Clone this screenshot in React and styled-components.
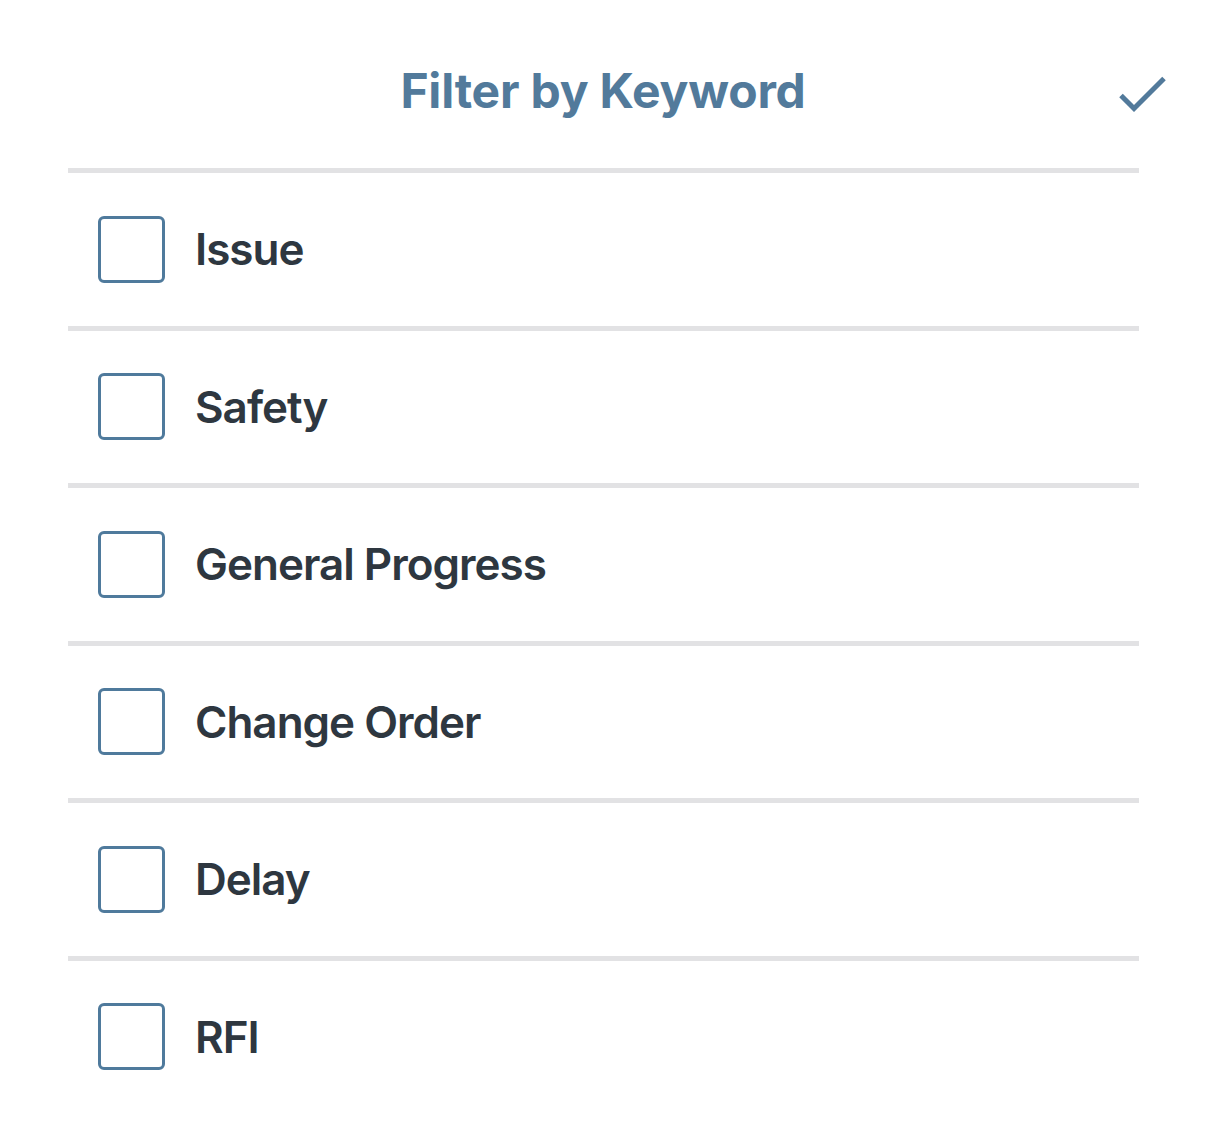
import React, { useState } from 'react';
import styled, { createGlobalStyle } from 'styled-components';

const keywords = ['Issue', 'Safety', 'General Progress', 'Change Order', 'Delay', 'RFI'];

const App = () => {
  const [checked, setChecked] = useState({});

  const toggle = (name) => {
    setChecked(prev => ({ ...prev, [name]: !prev[name] }));
  };

  return (
    <Page>
      <GlobalStyle />
      <Header>
        <Spacer />
        <Title>Filter by Keyword</Title>
        <DoneButton aria-label="Done">
          <svg width="56" height="56" viewBox="0 0 56 56" fill="none">
            <polyline
              points="8,32.5 21,45.5 51,15.5"
              stroke="#527a9b"
              strokeWidth="5"
              strokeLinecap="butt"
              strokeLinejoin="miter"
            />
          </svg>
        </DoneButton>
      </Header>

      <List>
        {keywords.map(name => (
          <Row key={name} onClick={() => toggle(name)}>
            <Box $checked={!!checked[name]} />
            <Label>{name}</Label>
          </Row>
        ))}
      </List>
    </Page>
  );
};

const GlobalStyle = createGlobalStyle`
  html, body {
    margin: 0;
    padding: 0;
    background: #ffffff;
  }

  body {
    font-family: Inter, "Noto Sans", "Liberation Sans", sans-serif;
  }
`;

const Page = styled.div`
  width: 1206px;
  min-height: 1130px;
  background: #ffffff;
`;

const Header = styled.div`
  box-sizing: border-box;
  height: 168px;
  padding-top: 13px;
  display: grid;
  grid-template-columns: 1fr auto 1fr;
  align-items: center;
`;

const Spacer = styled.div``;

const Title = styled.h1`
  margin: 0;
  font-size: 48px;
  font-weight: 700;
  color: #527a9b;
  letter-spacing: -0.2px;
`;

const DoneButton = styled.button`
  justify-self: end;
  margin-right: 37px;
  padding: 0;
  border: none;
  background: none;
  display: flex;
  cursor: pointer;
`;

const List = styled.div`
  margin: 0 67px 0 68px;
`;

const Row = styled.div`
  box-sizing: border-box;
  height: 157.5px;
  border-top: 5.5px solid #e2e2e4;
  padding-left: 30px;
  display: flex;
  align-items: center;
  gap: 30px;
  cursor: pointer;
`;

const Box = styled.div`
  box-sizing: border-box;
  width: 67px;
  height: 67px;
  border: 3px solid #4f7a9c;
  border-radius: 6px;
  background: ${p => (p.$checked ? '#4f7a9c' : '#ffffff')};
`;

const Label = styled.span`
  font-size: 44px;
  font-weight: 600;
  color: #2e3740;
  letter-spacing: -1px;
`;

export default App;
